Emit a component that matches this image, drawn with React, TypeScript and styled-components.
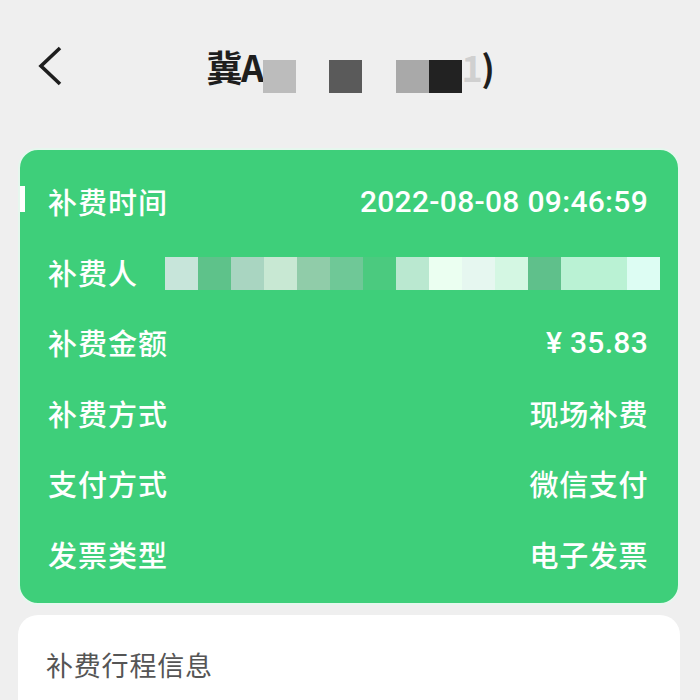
import * as React from "react";
import styled, { createGlobalStyle } from "styled-components";

const Green = "#3ecf7a";

const GlobalStyle = createGlobalStyle`
    html, body {
        margin: 0;
        padding: 0;
        background: #efefef;
    }
    body {
        font-family: Roboto, "Noto Sans CJK SC", "Noto Sans", sans-serif;
    }
`;

const Page = styled.div`
    width: 700px;
    height: 700px;
    overflow: hidden;
    background: #efefef;
    box-sizing: border-box;
    padding: 0 20px 0 18px;
    display: flex;
    flex-direction: column;
`;

const NavBar = styled.div`
    flex-shrink: 0;
    height: 134px;
    display: flex;
    align-items: center;
    position: relative;
    margin-left: 2px;
    margin-bottom: 14px;
`;

const BackButton = styled.div`
    width: 26px;
    height: 40px;
    margin-left: 18px;
    margin-top: -3px;
    display: flex;
    align-items: center;
    svg {
        display: block;
    }
`;

const Title = styled.div`
    position: absolute;
    left: 0;
    right: 0;
    top: 44px;
    display: flex;
    justify-content: center;
    align-items: flex-start;
    pointer-events: none;
    font-family: "Noto Sans CJK SC", sans-serif;
    font-size: 36px;
    font-weight: 700;
    color: #1e1e1e;
    line-height: 44px;
    letter-spacing: -1.5px;
`;

const TitleText = styled.span<{ faded?: boolean }>`
    color: ${p => (p.faded ? "#d0d0d0" : "#1e1e1e")};
`;

const Mosaic = styled.div`
    display: flex;
    margin-top: 16px;
`;

const Pixel = styled.span<{ color: string; w?: number; h?: number }>`
    display: block;
    flex-shrink: 0;
    width: ${p => p.w ?? 33}px;
    height: ${p => p.h ?? 33}px;
    background: ${p => p.color};
`;

const Spacer = styled.span<{ w: number }>`
    display: block;
    width: ${p => p.w}px;
`;

const InfoCard = styled.div`
    flex-shrink: 0;
    position: relative;
    background: ${Green};
    border: 2px solid #e6f7ee;
    border-radius: 20px;
    padding: 16px 30px 14px 28px;
    display: flex;
    flex-direction: column;
`;

const Indicator = styled.span`
    position: absolute;
    left: 0;
    top: 36px;
    width: 5px;
    height: 26px;
    background: #ffffff;
`;

const Row = styled.div`
    height: 70.5px;
    display: flex;
    align-items: center;
    justify-content: space-between;
    color: #ffffff;
`;

const Label = styled.span`
    font-family: "Noto Sans CJK SC", sans-serif;
    font-size: 29px;
    font-weight: 500;
    letter-spacing: 1px;
`;

const Value = styled.span<{ cjk?: boolean }>`
    font-family: ${p => (p.cjk ? `"Noto Sans CJK SC", sans-serif` : `Roboto, "Noto Sans CJK SC", sans-serif`)};
    font-size: ${p => (p.cjk ? 29 : 30)}px;
    font-weight: 500;
    letter-spacing: ${p => (p.cjk ? 0.6 : 0.3)}px;
`;

const PayerMosaic = styled.div`
    display: flex;
    margin-right: -12px;
    margin-top: 4px;
`;

const TripCard = styled.div`
    margin-top: 10px;
    background: #ffffff;
    border-radius: 20px 20px 0 0;
    padding: 30px 28px;
    flex: 1;
`;

const TripTitle = styled.div`
    font-family: "Noto Sans CJK SC", sans-serif;
    font-size: 27px;
    font-weight: 400;
    color: #555555;
    letter-spacing: 0.8px;
`;

const titleBlocks: { c: string; before: number }[] = [
    { c: "#bcbcbc", before: 0 },
    { c: "#5a5a5a", before: 33 },
    { c: "#a9a9a9", before: 34 },
    { c: "#222222", before: 0 },
];

const payerBlocks = [
    "#c7e5da", "#5ec28a", "#a9d5c1", "#c8e8d3", "#90cca9",
    "#6fc897", "#4bca7f", "#bae8d0", "#ebfff1", "#e6f7f0",
    "#d4f7e3", "#5fc08b", "#baf2d4", "#baf2d4", "#ddfdf3",
];

const rows: { label: string; value: string; cjk?: boolean }[] = [
    { label: "补费时间", value: "2022-08-08 09:46:59" },
    { label: "补费人", value: "" },
    { label: "补费金额", value: "¥ 35.83" },
    { label: "补费方式", value: "现场补费", cjk: true },
    { label: "支付方式", value: "微信支付", cjk: true },
    { label: "发票类型", value: "电子发票", cjk: true },
];

const ChevronLeft = () => (
    <svg width="26" height="40" viewBox="0 0 26 40">
        <polyline points="22,2 3,20 22,38" fill="none" stroke="#1e1e1e" strokeWidth="3.6" strokeLinecap="butt" strokeLinejoin="miter" />
    </svg>
);

export default function App() {
    return (
        <>
            <GlobalStyle />
            <Page>
                <NavBar>
                    <BackButton>
                        <ChevronLeft />
                    </BackButton>
                    <Title>
                        <TitleText>冀A</TitleText>
                        <Mosaic>
                            {titleBlocks.map((b, i) => (
                                <React.Fragment key={i}>
                                    {b.before > 0 && <Spacer w={b.before} />}
                                    <Pixel color={b.c} />
                                </React.Fragment>
                            ))}
                        </Mosaic>
                        <TitleText faded>1</TitleText>
                        <TitleText>)</TitleText>
                    </Title>
                </NavBar>
                <InfoCard>
                    <Indicator />
                    {rows.map(r => (
                        <Row key={r.label}>
                            <Label>{r.label}</Label>
                            {r.label === "补费人" ? (
                                <PayerMosaic>
                                    {payerBlocks.map((c, i) => (
                                        <Pixel key={i} color={c} w={33} h={33} />
                                    ))}
                                </PayerMosaic>
                            ) : (
                                <Value cjk={r.cjk}>{r.value}</Value>
                            )}
                        </Row>
                    ))}
                </InfoCard>
                <TripCard>
                    <TripTitle>补费行程信息</TripTitle>
                </TripCard>
            </Page>
        </>
    );
}
